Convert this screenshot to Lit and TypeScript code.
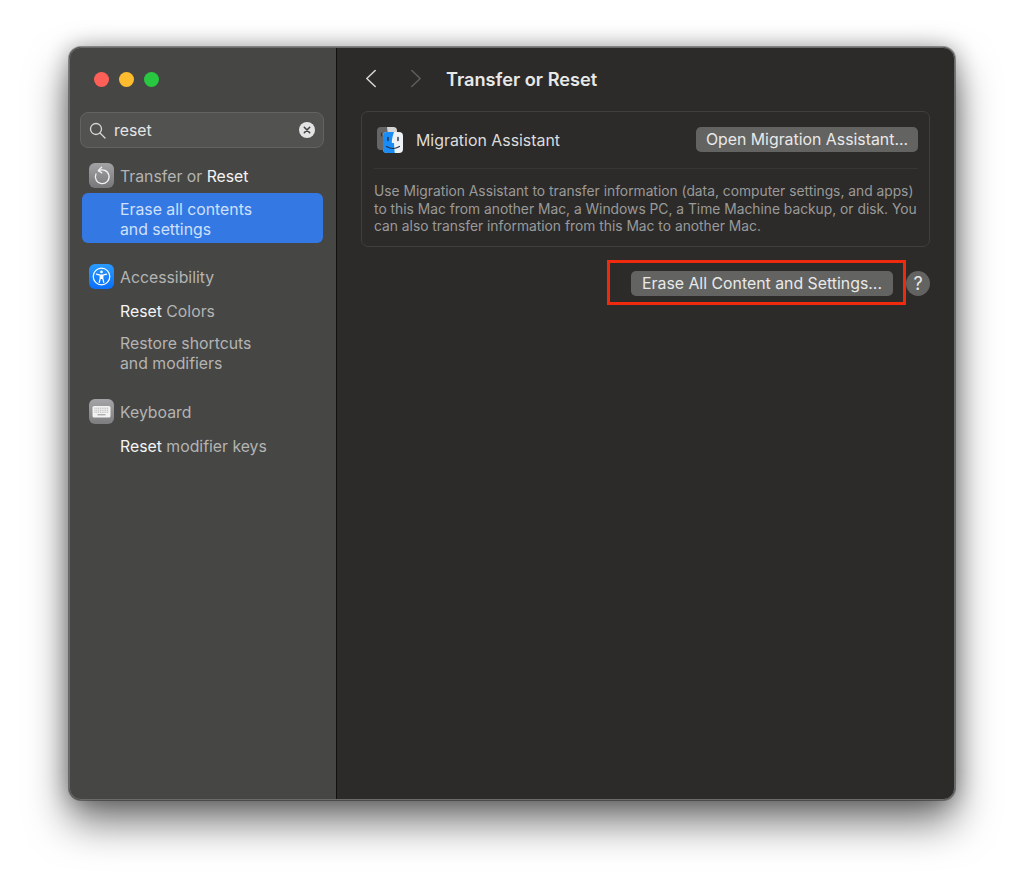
import { LitElement, html, css } from "lit";
import { customElement } from "lit/decorators.js";

@customElement("app-root")
export class AppRoot extends LitElement {
  static styles = css`
    :host { display: block; width: 1024px; height: 892px; background: #fff; font-family: Inter, "Noto Sans", sans-serif; overflow: hidden; box-sizing: border-box; padding: 47px 69px 92px; -webkit-font-smoothing: antialiased; }
    .window { height: 753px; display: flex; border-radius: 12px; overflow: hidden; background: #2c2b2a; position: relative; }
    .shadowbox { border-radius: 12px; box-shadow: 0 0 0 1px rgba(0,0,0,.35), 0 22px 42px rgba(0,0,0,.55), 0 0 22px rgba(0,0,0,.32); }
    .window::after { content: ""; position: absolute; inset: 0; border-radius: 12px; border: 1px solid #6b6b6a; pointer-events: none; }
    .side { width: 267px; flex: none; background: #464645; border-right: 1px solid #111; box-sizing: content-box; padding-top: 25px; display: flex; flex-direction: column; }
    .lights { display: flex; gap: 10px; padding-left: 25px; height: 15px; }
    .light { width: 15px; height: 15px; border-radius: 50%; }
    .search { margin: 25px 12px 0 11px; height: 36px; box-sizing: border-box; border-radius: 8px; background: #525251; border: 1px solid #636362; display: flex; align-items: center; padding: 0 8px; color: #e4e4e4; font-size: 15.8px; }
    .search span { flex: 1; margin-left: 8px; }
    .group { display: flex; flex-direction: column; }
    .head { display: flex; align-items: center; height: 25px; padding-left: 20px; gap: 6px; font-size: 15.8px; color: #b4b4b3; }
    .head span { padding-top: 2px; }
    .icon { width: 25px; height: 25px; flex: none; display: block; }
    b { font-weight: 400; color: #f4f4f4; }
    .item { font-size: 15.8px; line-height: 20px; color: #b4b4b3; padding: 0 0 0 51px; }
    .selected { margin: 5px 13px 0 13px; padding: 7px 0 3px 38px; height: 50px; line-height: 19.5px; box-sizing: border-box; background: #3478e4; border-radius: 6px; color: #cfe0fb; }
    .main { flex: 1; min-width: 0; padding: 20px 25px 0 24px; display: flex; flex-direction: column; }
    .top { display: flex; align-items: center; height: 24px; color: #eee; }
    .title { font-size: 18.2px; font-weight: 600; color: #e8e8e7; margin-left: 24px; }
    .nav { display: block; margin-left: 4px; }
    .nav.next { margin-left: 33px; }
    .card { margin-top: 20px; height: 136px; box-sizing: border-box; border: 1px solid #3f3f3e; border-radius: 7px; padding: 0 11px 0 12px; }
    .card-row { height: 57px; display: flex; align-items: center; border-bottom: 1px solid #363635; box-sizing: border-box; }
    .card-name { font-size: 15.9px; color: #dcdcdb; margin-left: 13px; flex: 1; }
    .finder { margin-left: 3px; display: block; }
    .btn { background: #636362; border-radius: 5px; color: #e9e9e8; font-size: 15.85px; height: 25px; display: flex; align-items: center; justify-content: center; box-sizing: border-box; white-space: nowrap; }
    .desc { font-size: 13.8px; line-height: 17.5px; color: #9a9a99; padding-top: 14px; white-space: nowrap; }
    .actions { display: flex; justify-content: flex-end; align-items: flex-start; margin-top: 13px; }
    .outline { width: 299px; height: 45px; box-sizing: border-box; border: 3px solid #f02a0c; display: flex; align-items: flex-start; justify-content: flex-end; padding: 8px 10px 0 0; }
    .btn.erase { width: 262px; }
    .btn.open { width: 222px; margin-top: -2px; }
    .help { width: 24px; height: 25px; margin-top: 11px; border-radius: 50%; background: #636362; color: #e9e9e8; display: flex; align-items: center; justify-content: center; font-size: 18px; }
  `;

  render() {
    return html`
      <div class="shadowbox">
        <div class="window">
          <aside class="side">
            <div class="lights">
              <div class="light" style="background:#fe5f57"></div>
              <div class="light" style="background:#febc2e"></div>
              <div class="light" style="background:#28c840"></div>
            </div>
            <div class="search">
              <svg width="17" height="17" viewBox="0 0 17 17" fill="none" stroke="#d8d8d8" stroke-width="1.3"><circle cx="7" cy="7" r="5.5"/><path d="M11 11l5 5" stroke-linecap="round"/></svg>
              <span>reset</span>
              <svg width="16" height="16" viewBox="0 0 16 16"><circle cx="8" cy="8" r="8" fill="#e4e4e4"/><path d="M5.3 5.3l5.4 5.4M10.7 5.3l-5.4 5.4" stroke="#444" stroke-width="1.6" stroke-linecap="round"/></svg>
            </div>
            <div class="group" style="margin-top:15px">
              <div class="head">
                <svg class="icon" viewBox="0 0 25 25">
                  <defs><linearGradient id="g1" x1="0" y1="0" x2="0" y2="1"><stop offset="0" stop-color="#a3a3a5"/><stop offset="1" stop-color="#77777a"/></linearGradient></defs>
                  <rect width="25" height="25" rx="6" fill="url(#g1)"/>
                  <path d="M9.2 7.6A7 7 0 1 1 6.6 10.6" transform="translate(.5 .6) scale(.98)" fill="none" stroke="#f2f2f2" stroke-width="1.3" stroke-linecap="round"/>
                  <path d="M12.6 4.2L9.4 7.5l3.4 2.4" fill="none" stroke="#f2f2f2" stroke-width="1.3" stroke-linecap="round" stroke-linejoin="round"/>
                </svg>
                <span>Transfer or <b>Reset</b></span>
              </div>
              <div class="item selected">Erase all contents<br />and settings</div>
            </div>
            <div class="group" style="margin-top:21px">
              <div class="head">
                <svg class="icon" viewBox="0 0 25 25">
                  <defs><linearGradient id="g2" x1="0" y1="0" x2="0" y2="1"><stop offset="0" stop-color="#2a9bfd"/><stop offset="1" stop-color="#0a6ffa"/></linearGradient></defs>
                  <rect width="25" height="25" rx="6" fill="url(#g2)"/>
                  <circle cx="12.5" cy="12.5" r="8.3" fill="none" stroke="#fff" stroke-width="1.2"/>
                  <circle cx="12.5" cy="7.9" r="1.3" fill="#fff"/>
                  <path d="M7.4 10.2l3.7.9h2.8l3.7-.9M11.2 11.1v3.4l-1 4M13.8 11.1v3.4l1 4M11.2 14.5h2.6" fill="none" stroke="#fff" stroke-width="1.2" stroke-linecap="round" stroke-linejoin="round"/>
                  <path d="M11.2 11.1h2.6v3.4h-2.6z" fill="#fff"/>
                </svg>
                <span>Accessibility</span>
              </div>
              <div class="item" style="margin-top:13px"><b>Reset</b> Colors</div>
              <div class="item" style="margin-top:12px">Restore shortcuts<br />and modifiers</div>
            </div>
            <div class="group" style="margin-top:25px">
              <div class="head">
                <svg class="icon" viewBox="0 0 25 25">
                  <defs><linearGradient id="g3" x1="0" y1="0" x2="0" y2="1"><stop offset="0" stop-color="#a5a5a7"/><stop offset="1" stop-color="#7d7d80"/></linearGradient></defs>
                  <rect width="25" height="25" rx="6" fill="url(#g3)"/>
                  <rect x="3.5" y="7" width="18" height="11.5" rx="1.5" fill="#f2f2f2"/>
                  <path d="M5.5 9.2h14M5.5 11.2h14M5.5 13.2h14" stroke="#9b9b9d" stroke-width=".8" stroke-dasharray="1 .8"/>
                  <path d="M8.5 15.8h8" stroke="#8f8f91" stroke-width="1"/>
                </svg>
                <span>Keyboard</span>
              </div>
              <div class="item" style="margin-top:13px"><b>Reset</b> modifier keys</div>
            </div>
          </aside>
          <main class="main">
            <div class="top">
              <svg class="nav" width="12" height="20" viewBox="0 0 12 20" fill="none" stroke="#d2d2d1" stroke-width="1.6" stroke-linecap="round" stroke-linejoin="round"><path d="M10.2 1.5L1.8 9.5l8.4 8"/></svg>
              <svg class="nav next" width="12" height="20" viewBox="0 0 12 20" fill="none" stroke="#5d5d5c" stroke-width="1.6" stroke-linecap="round" stroke-linejoin="round"><path d="M1.8 1.5L10.2 9.5l-8.4 8"/></svg>
              <div class="title">Transfer or Reset</div>
            </div>
            <section class="card">
              <div class="card-row">
                <svg class="finder" width="26" height="26" viewBox="0 0 26 26">
                  <rect x="0" y="0" width="20" height="23" rx="4" fill="#666"/>
                  <path d="M10 0h6a4 4 0 0 1 4 4v15a4 4 0 0 1-4 4h-3z" fill="#d4d4d4"/>
                  <path d="M4.5 6v3" stroke="#333" stroke-width="1.2" stroke-linecap="round"/>
                  <rect x="6" y="5" width="20" height="21" rx="4" fill="#eef1f5"/>
                  <path d="M10 5h7c-1.3 3.6-2.2 7.2-2.2 11H17c0 3.3.3 6.6.8 10H10a4 4 0 0 1-4-4V9a4 4 0 0 1 4-4z" fill="#1a8cf5"/>
                  <path d="M11 10.5v3M21 10.5v3" stroke="#1c2e4a" stroke-width="1.4" stroke-linecap="round"/>
                  <path d="M9.5 19.5c3.8 2.4 9 2.4 13 0" fill="none" stroke="#1c2e4a" stroke-width="1.2" stroke-linecap="round"/>
                </svg>
                <div class="card-name">Migration Assistant</div>
                <div class="btn open">Open Migration Assistant...</div>
              </div>
              <div class="desc">Use Migration Assistant to transfer information (data, computer settings, and apps)<br />to this Mac from another Mac, a Windows PC, a Time Machine backup, or disk. You<br />can also transfer information from this Mac to another Mac.</div>
            </section>
            <div class="actions">
              <div class="outline"><div class="btn erase">Erase All Content and Settings...</div></div>
              <div class="help">?</div>
            </div>
          </main>
        </div>
      </div>
    `;
  }
}
